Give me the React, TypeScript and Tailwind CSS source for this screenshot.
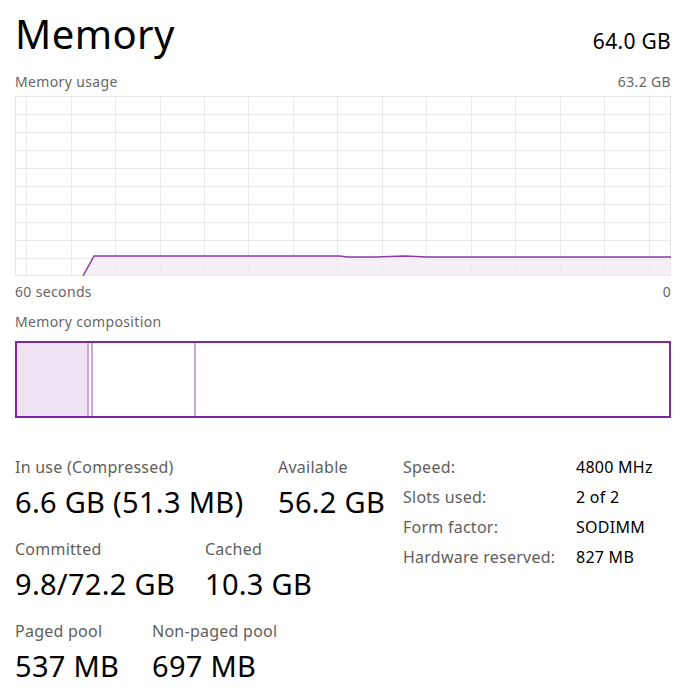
import React from 'react';

const font = { fontFamily: '"Noto Sans", "Open Sans", sans-serif' };

const vLines = [11, 56, 100, 145, 189, 233, 278, 322, 367, 411, 456, 500, 545, 589, 634];
const hLines = [18, 36, 54, 72, 90, 108, 126, 144, 162];

function UsageChart() {
  const line = '68,180 79,160 325,160 332,161 360,161 390,160 412,161 656,161';
  return (
    <svg width="656" height="180" viewBox="0 0 656 180" className="block">
      <rect x="0.5" y="0.5" width="655" height="179" fill="#fff" stroke="#e6e6e6" />
      {vLines.map((x) => (
        <line key={'v' + x} x1={x + 0.5} y1="0" x2={x + 0.5} y2="180" stroke="#e9e9e9" />
      ))}
      {hLines.map((y) => (
        <line key={'h' + y} x1="0" y1={y + 0.5} x2="656" y2={y + 0.5} stroke="#e9e9e9" />
      ))}
      <polygon points={`${line} 656,180`} fill="#efeaf1" fillOpacity="0.75" />
      <polyline points={line} fill="none" stroke="#8b3aa6" strokeWidth="1.5" />
    </svg>
  );
}

function Stat({ label, value, w }: { label: string; value: string; w: string }) {
  return (
    <div className={`${w} shrink-0`}>
      <div className="text-[16px] leading-[20px] tracking-[0.25px] text-[#5e5e5e]">{label}</div>
      <div className="mt-[7px] text-[29px] leading-[36px] tracking-[0.3px] text-black">{value}</div>
    </div>
  );
}

const specs = [
  ['Speed:', '4800 MHz'],
  ['Slots used:', '2 of 2'],
  ['Form factor:', 'SODIMM'],
  ['Hardware reserved:', '827 MB'],
];

export default function App() {
  return (
    <div className="w-[687px] h-[694px] bg-white pl-[15px] pr-[16px] overflow-hidden" style={font}>
      <div className="flex items-baseline justify-between pt-[6px]">
        <h1 className="text-[40px] leading-[56px] tracking-[0.4px] font-normal text-black">Memory</h1>
        <span className="text-[21px] tracking-[0.3px] text-black">64.0 GB</span>
      </div>
      <div className="flex justify-between text-[14px] leading-[20px] tracking-[0.35px] text-[#666] mt-[10px]">
        <span>Memory usage</span>
        <span>63.2 GB</span>
      </div>
      <div className="mt-[4px]">
        <UsageChart />
      </div>
      <div className="flex justify-between text-[14px] leading-[20px] tracking-[0.35px] text-[#666] mt-[6px]">
        <span>60 seconds</span>
        <span>0</span>
      </div>
      <div className="text-[14px] leading-[20px] tracking-[0.35px] text-[#666] mt-[10px]">Memory composition</div>
      <div className="mt-[9px] h-[77px] border-2 border-[#7e2a9c] flex">
        <div className="w-[70px] bg-[#ede3f2]" />
        <div className="w-[2px] bg-[#caa9d9]" />
        <div className="w-[2px] bg-white" />
        <div className="w-[2px] bg-[#caa9d9]" />
        <div className="w-[101px]" />
        <div className="w-[2px] bg-[#caa9d9]" />
        <div className="flex-1" />
      </div>
      <div className="flex mt-[39px]">
        <div className="w-[388px] flex flex-col gap-[19px]">
          <div className="flex">
            <Stat label="In use (Compressed)" value="6.6 GB (51.3 MB)" w="w-[263px]" />
            <Stat label="Available" value="56.2 GB" w="w-[120px]" />
          </div>
          <div className="flex">
            <Stat label="Committed" value="9.8/72.2 GB" w="w-[190px]" />
            <Stat label="Cached" value="10.3 GB" w="w-[120px]" />
          </div>
          <div className="flex">
            <Stat label="Paged pool" value="537 MB" w="w-[137px]" />
            <Stat label="Non-paged pool" value="697 MB" w="w-[150px]" />
          </div>
        </div>
        <div className="flex flex-col gap-[10px] text-[16px] leading-[20px] tracking-[0.25px]">
          {specs.map(([k, v]) => (
            <div key={k} className="flex">
              <span className="w-[173px] text-[#5e5e5e]">{k}</span>
              <span className="text-black">{v}</span>
            </div>
          ))}
        </div>
      </div>
    </div>
  );
}
